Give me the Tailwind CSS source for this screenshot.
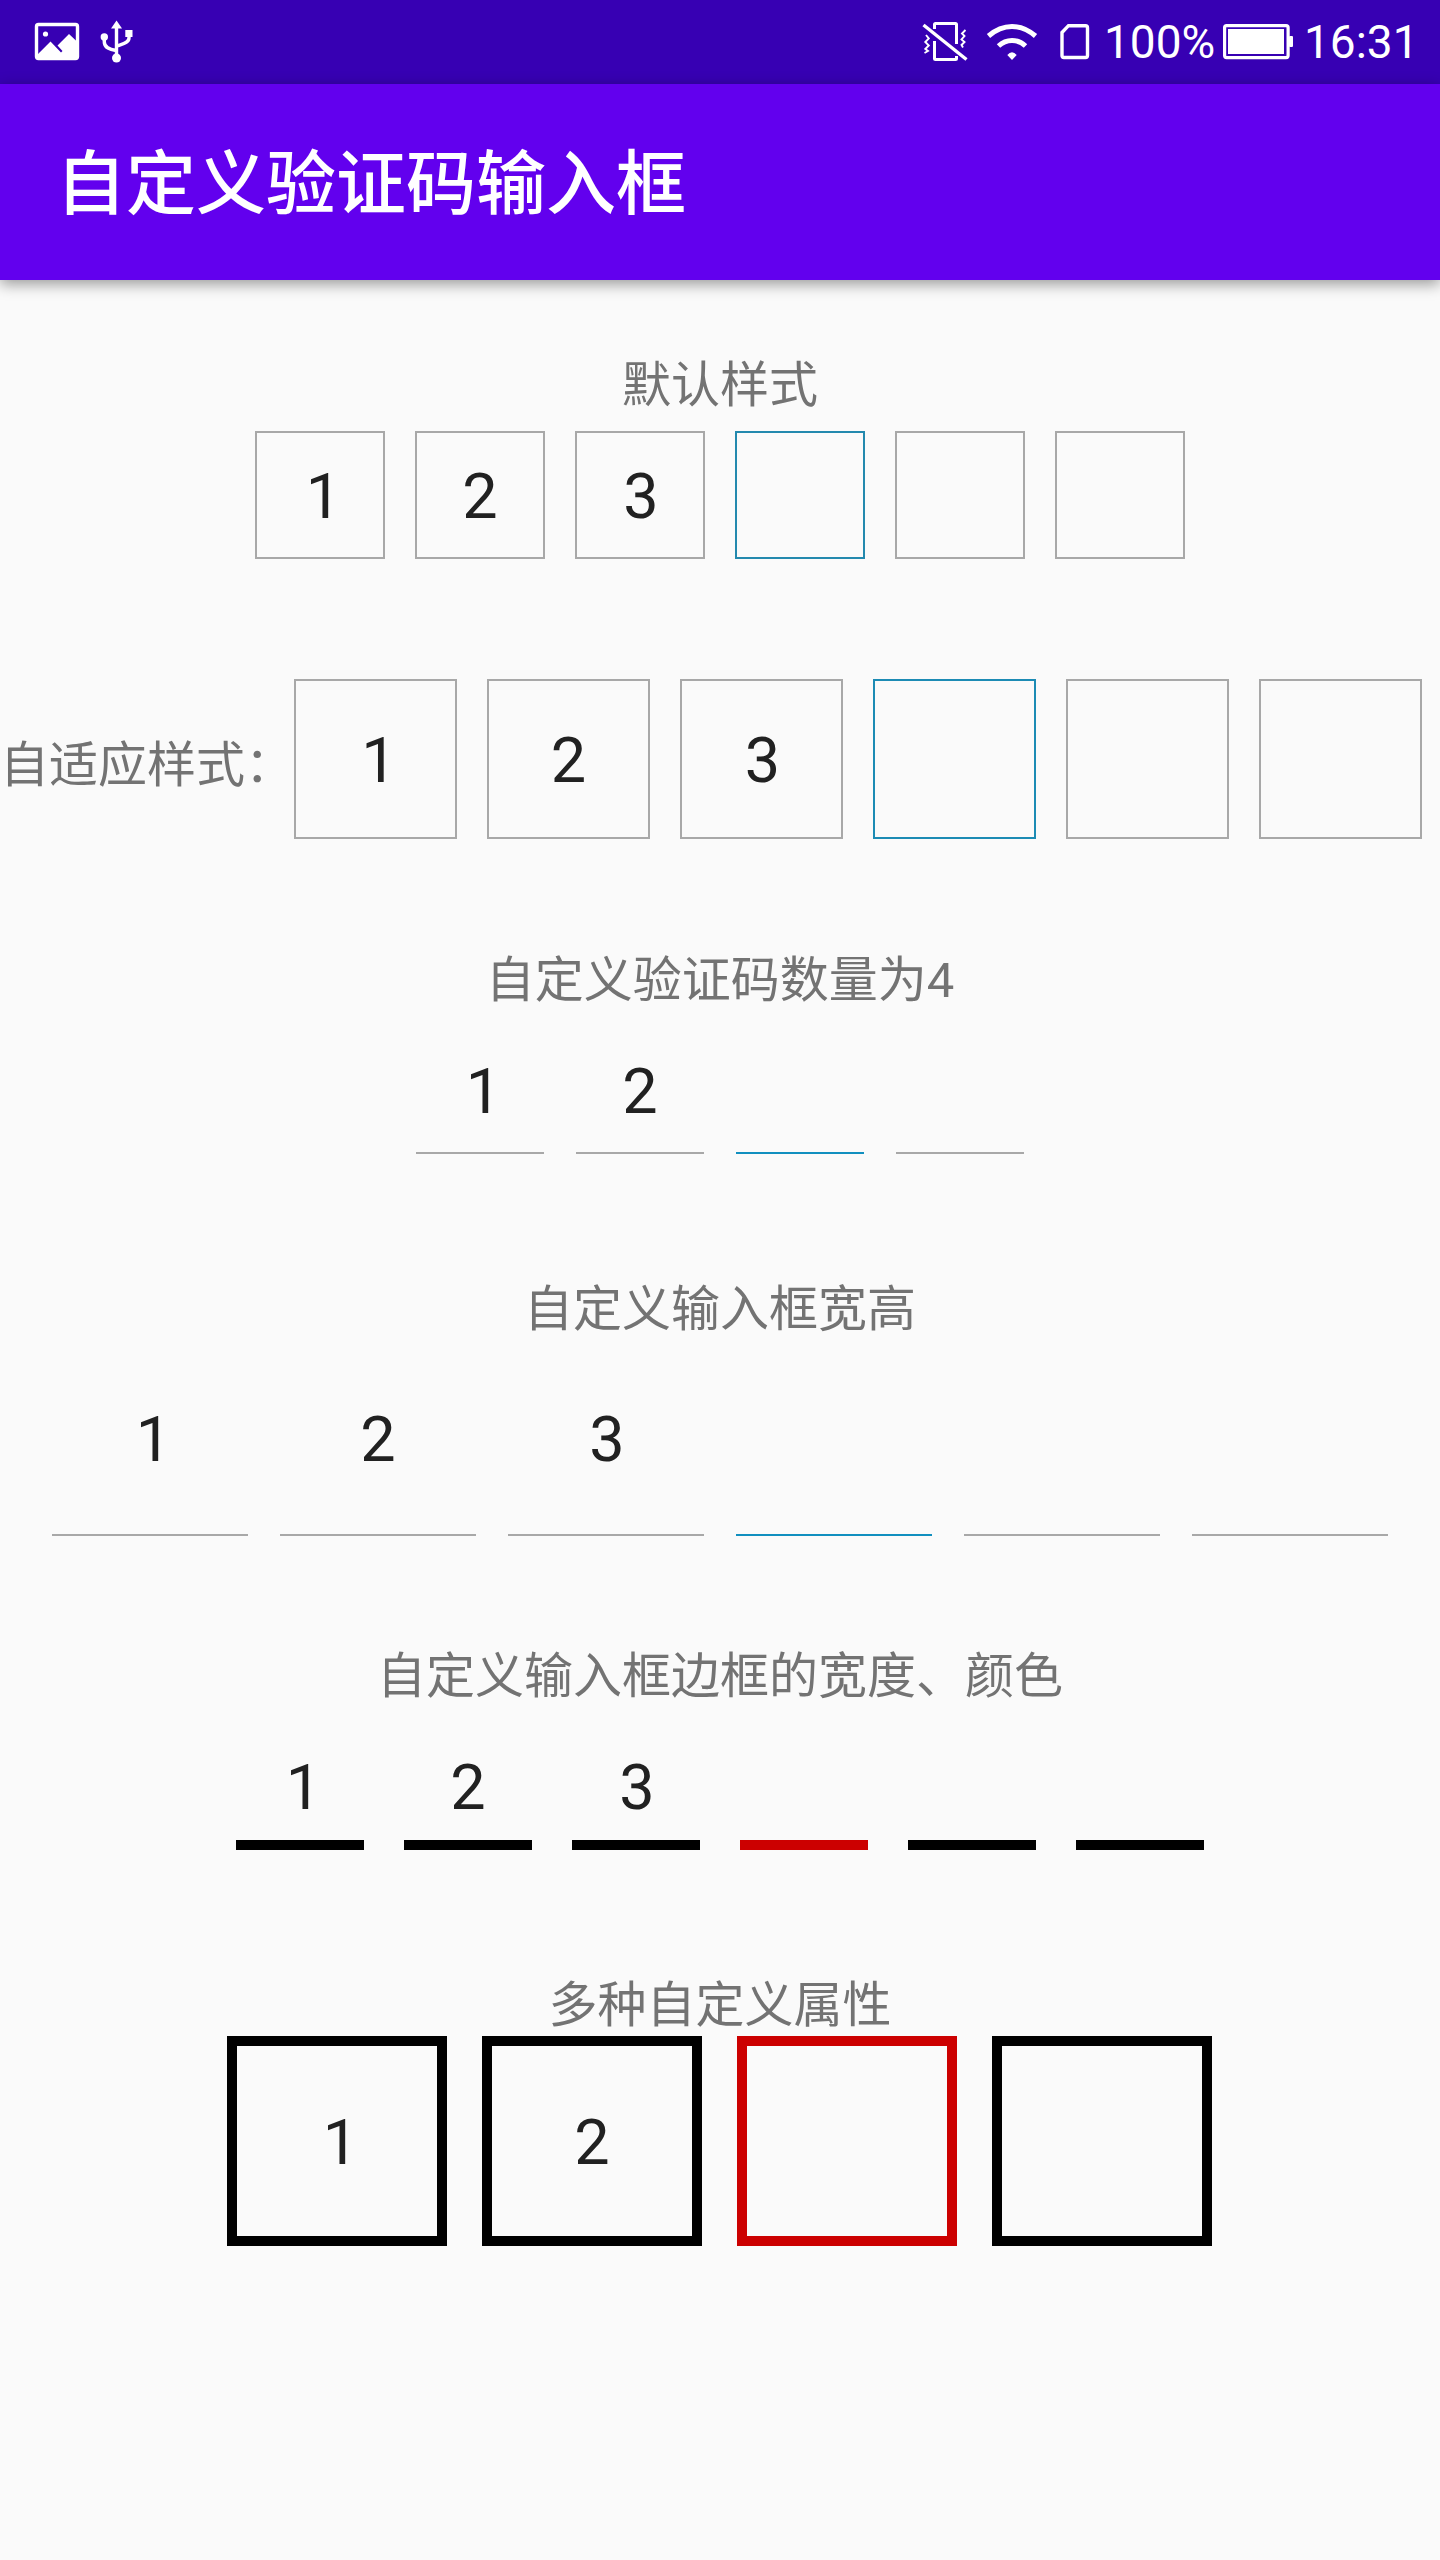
<!DOCTYPE html>
<html lang="zh-CN">
<head>
<meta charset="utf-8">
<title>自定义验证码输入框</title>
<script src="https://cdn.jsdelivr.net/npm/@tailwindcss/browser@4"></script>
</head>
<body class="w-[1440px] h-[2560px] overflow-hidden bg-[#fafafa] font-[Roboto,'Noto_Sans_CJK_SC',sans-serif] text-[#212121]">
<!-- Status bar -->
<header class="flex h-[84px] items-center bg-[#3700b3] text-white text-[46px] leading-[84px]">
  <svg class="ml-[34px] shrink-0" width="46" height="84" viewBox="34 0 46 84" fill="none"><rect x="36.5" y="24.5" width="41" height="34" rx="2" stroke="#fff" stroke-width="3.4"/><circle cx="45.5" cy="34" r="2.6" fill="#fff"/><path d="M37 55L50.500 41.500L61 52.500L62.500 51L57.500 45.500L69 34L78 42.500V59H37Z" fill="#fff"/></svg>
  <svg class="ml-[20px] shrink-0" width="34" height="84" viewBox="100 0 34 84" fill="none" stroke="#fff" stroke-width="3.4"><path d="M116.500 26V56M104.300 38V42C104.300 48 110 49.500 116 50.500M129 35V38C129 43 122 44 117 46"/><path d="M116.500 20.500L122 28.500H111Z" fill="#fff" stroke="none"/><circle cx="104.300" cy="37" r="3.700" fill="#fff" stroke="none"/><circle cx="116.500" cy="58" r="4.500" fill="#fff" stroke="none"/><rect x="125.300" y="30" width="7.200" height="7" fill="#fff" stroke="none"/></svg>
  <svg class="ml-[786px] shrink-0" width="50" height="84" viewBox="920 0 50 84" fill="none"><path d="M934.500 29V24.500Q934.500 23.500 935.500 23.500H955.500Q956.500 23.500 956.500 24.500V44M934.500 41V58.500Q934.500 59.500 935.500 59.500H955.500Q956.500 59.500 956.500 58.500V56" stroke="#fff" stroke-width="3"/><path d="M923.500 25L966.500 59.500" stroke="#fff" stroke-width="3.400"/><path d="M926 35L928.800 38.500L925.300 42L928.800 45.500L925.300 49L928 51L924.500 53M965.500 30L962 33.500L964.500 36L961.500 39.500L964.500 42L961.500 45L963 47.500" stroke="#fff" stroke-width="1.900"/></svg>
  <svg class="ml-[16px] shrink-0" width="52" height="84" viewBox="986 0 52 84" fill="none" stroke="#fff"><path d="M988.500 36Q999.500 26.500 1012 26.500T1035.500 36" stroke-width="5"/><path d="M998.500 46Q1004.500 40.500 1012 40.500T1025.500 46" stroke-width="5"/><path d="M1007.300 55Q1012 49.500 1016.700 55L1012 60Z" fill="#fff" stroke="none"/></svg>
  <svg class="ml-[20px] shrink-0" width="34" height="84" viewBox="1058 0 34 84" fill="none"><path d="M1068.500 25.700H1085.500Q1087.500 25.700 1087.500 27.700V55.500Q1087.500 57.500 1085.500 57.500H1064Q1062 57.500 1062 55.500V32.500Z" stroke="#fff" stroke-width="3.400"/></svg>
  <span class="ml-3 w-[116px] shrink-0">100%</span>
  <svg class="ml-[2px] shrink-0" width="72" height="84" viewBox="1222 0 72 84" fill="none"><rect x="1224.600" y="25.600" width="63.500" height="32" rx="2" stroke="#fff" stroke-width="3.200"/><rect x="1228" y="29" width="56" height="25" fill="#fff"/><rect x="1289" y="36" width="4" height="11" rx="1" fill="#fff"/></svg>
  <span class="ml-2.5">16:31</span>
</header>
<!-- App bar -->
<div class="relative flex h-[196px] items-center bg-[#6200ee] pt-[5px] pl-14 shadow-[0_4px_14px_rgba(0,0,0,0.4)]">
  <h1 class="text-[70px] leading-[80px] font-medium text-white">自定义验证码输入框</h1>
</div>
<main class="flex flex-col items-center text-[63px] leading-none">
  <h2 class="mt-[76px] text-[49px] leading-[60px] text-[#737373]">默认样式</h2>
  <div class="mt-[15px] flex gap-[30px]">
    <div class="flex h-32 w-[130px] items-center justify-center border-2 border-[#a8a8a8] pt-0.5 pl-[7px]">1</div>
    <div class="flex h-32 w-[130px] items-center justify-center border-2 border-[#a8a8a8] pt-0.5">2</div>
    <div class="flex h-32 w-[130px] items-center justify-center border-2 border-[#a8a8a8] pt-0.5 pl-0.5">3</div>
    <div class="h-32 w-[130px] border-2 border-[#2389ae]"></div>
    <div class="h-32 w-[130px] border-2 border-[#a8a8a8]"></div>
    <div class="h-32 w-[130px] border-2 border-[#a8a8a8]"></div>
  </div>

  <div class="mt-[120px] flex w-full items-center">
    <h2 class="w-[294px] shrink-0 pt-3.5 text-[49px] leading-[60px] whitespace-nowrap text-[#737373]">自适应样式：</h2>
    <div class="flex gap-[30px]">
      <div class="flex h-40 w-[163px] items-center justify-center border-2 border-[#a8a8a8] pt-0.5 pl-[7px]">1</div>
      <div class="flex h-40 w-[163px] items-center justify-center border-2 border-[#a8a8a8] pt-0.5">2</div>
      <div class="flex h-40 w-[163px] items-center justify-center border-2 border-[#a8a8a8] pt-0.5 pl-0.5">3</div>
      <div class="h-40 w-[163px] border-2 border-[#1c8bb4]"></div>
      <div class="h-40 w-[163px] border-2 border-[#a8a8a8]"></div>
      <div class="h-40 w-[163px] border-2 border-[#a8a8a8]"></div>
    </div>
  </div>

  <h2 class="mt-28 text-[49px] leading-[60px] text-[#737373]">自定义验证码数量为4</h2>
  <div class="mt-[17px] flex gap-8">
    <div class="flex h-[126px] w-32 items-center justify-center border-b-2 border-[#a8a8a8] pt-0.5 pl-[7px]">1</div>
    <div class="flex h-[126px] w-32 items-center justify-center border-b-2 border-[#a8a8a8] pt-0.5">2</div>
    <div class="h-[126px] w-32 border-b-2 border-[#118fbf]"></div>
    <div class="h-[126px] w-32 border-b-2 border-[#a8a8a8]"></div>
  </div>

  <h2 class="mt-[126px] text-[49px] leading-[60px] text-[#737373]">自定义输入框宽高</h2>
  <div class="mt-0.5 flex gap-8">
    <div class="flex h-[194px] w-[196px] items-center justify-center border-b-2 border-[#a8a8a8] pt-0.5 pl-[7px]">1</div>
    <div class="flex h-[194px] w-[196px] items-center justify-center border-b-2 border-[#a8a8a8] pt-0.5">2</div>
    <div class="flex h-[194px] w-[196px] items-center justify-center border-b-2 border-[#a8a8a8] pt-0.5 pl-0.5">3</div>
    <div class="h-[194px] w-[196px] border-b-2 border-[#118fbf]"></div>
    <div class="h-[194px] w-[196px] border-b-2 border-[#a8a8a8]"></div>
    <div class="h-[194px] w-[196px] border-b-2 border-[#a8a8a8]"></div>
  </div>

  <h2 class="mt-[111px] text-[49px] leading-[60px] text-[#737373]">自定义输入框边框的宽度、颜色</h2>
  <div class="mt-[25px] flex gap-10">
    <div class="flex h-[118px] w-32 items-center justify-center border-b-10 border-black pt-0.5 pl-[7px]">1</div>
    <div class="flex h-[118px] w-32 items-center justify-center border-b-10 border-black pt-0.5">2</div>
    <div class="flex h-[118px] w-32 items-center justify-center border-b-10 border-black pt-0.5 pl-0.5">3</div>
    <div class="h-[118px] w-32 border-b-10 border-[#cc0000]"></div>
    <div class="h-[118px] w-32 border-b-10 border-black"></div>
    <div class="h-[118px] w-32 border-b-10 border-black"></div>
  </div>

  <h2 class="mt-[126px] text-[49px] leading-[60px] text-[#737373]">多种自定义属性</h2>
  <div class="mr-px flex gap-[35px]">
    <div class="flex h-[210px] w-[220px] items-center justify-center border-10 border-black pt-0.5 pl-[7px]">1</div>
    <div class="flex h-[210px] w-[220px] items-center justify-center border-10 border-black pt-0.5">2</div>
    <div class="h-[210px] w-[220px] border-10 border-[#cc0000]"></div>
    <div class="h-[210px] w-[220px] border-10 border-black"></div>
  </div>
</main>
</body>
</html>
